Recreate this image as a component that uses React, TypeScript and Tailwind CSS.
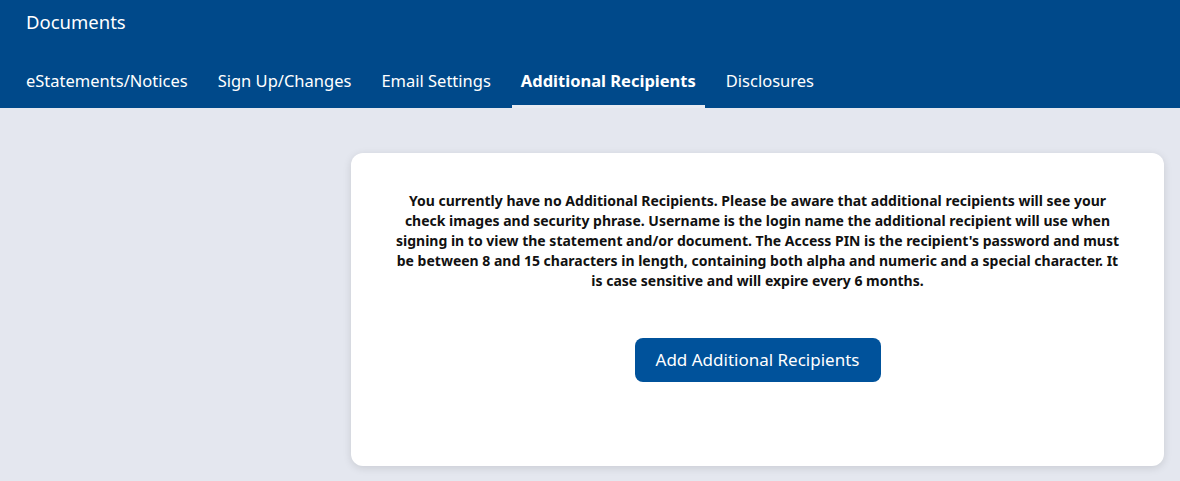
const tabs = [
  "eStatements/Notices",
  "Sign Up/Changes",
  "Email Settings",
  "Additional Recipients",
  "Disclosures",
];

const message = [
  "You currently have no Additional Recipients. Please be aware that additional recipients will see your",
  "check images and security phrase. Username is the login name the additional recipient will use when",
  "signing in to view the statement and/or document. The Access PIN is the recipient's password and must",
  "be between 8 and 15 characters in length, containing both alpha and numeric and a special character. It",
  "is case sensitive and will expire every 6 months.",
];

export default function App() {
  const active = "Additional Recipients";

  return (
    <div className="min-h-[481px] bg-[#e4e7ef] font-['Noto_Sans',sans-serif]">
      <header className="bg-[#00498a] text-white">
        <div className="px-[26px] pt-[9px] text-[18.5px] leading-[26px]">Documents</div>
        <nav className="mt-[34px] flex gap-[12px] px-[17px]">
          {tabs.map((tab) => (
            <div
              key={tab}
              className={
                tab === active
                  ? "border-b-[3px] border-[#e8ebf2] px-[9px] pb-[12px] text-[16.5px] leading-[24px] font-bold"
                  : "border-b-[3px] border-transparent px-[9px] pb-[12px] text-[16.5px] leading-[24px]"
              }
            >
              {tab}
            </div>
          ))}
        </nav>
      </header>

      <main className="grid grid-cols-[319px_1fr] gap-4 px-4 pt-[45px] pb-[15px]">
        <div />
        <section className="flex h-[313px] flex-col items-center rounded-xl bg-white px-[20px] pt-[38px] shadow-[0_2px_8px_rgba(0,0,0,0.12)]">
          <p className="text-center text-[14px] leading-[20px] font-bold text-[#111]">
            {message.map((line) => (
              <span key={line} className="block whitespace-nowrap">
                {line}
              </span>
            ))}
          </p>
          <button
            type="button"
            className="mt-[47px] h-[44px] w-[246px] rounded-lg bg-[#00529b] text-[17px] text-white"
          >
            Add Additional Recipients
          </button>
        </section>
      </main>
    </div>
  );
}
